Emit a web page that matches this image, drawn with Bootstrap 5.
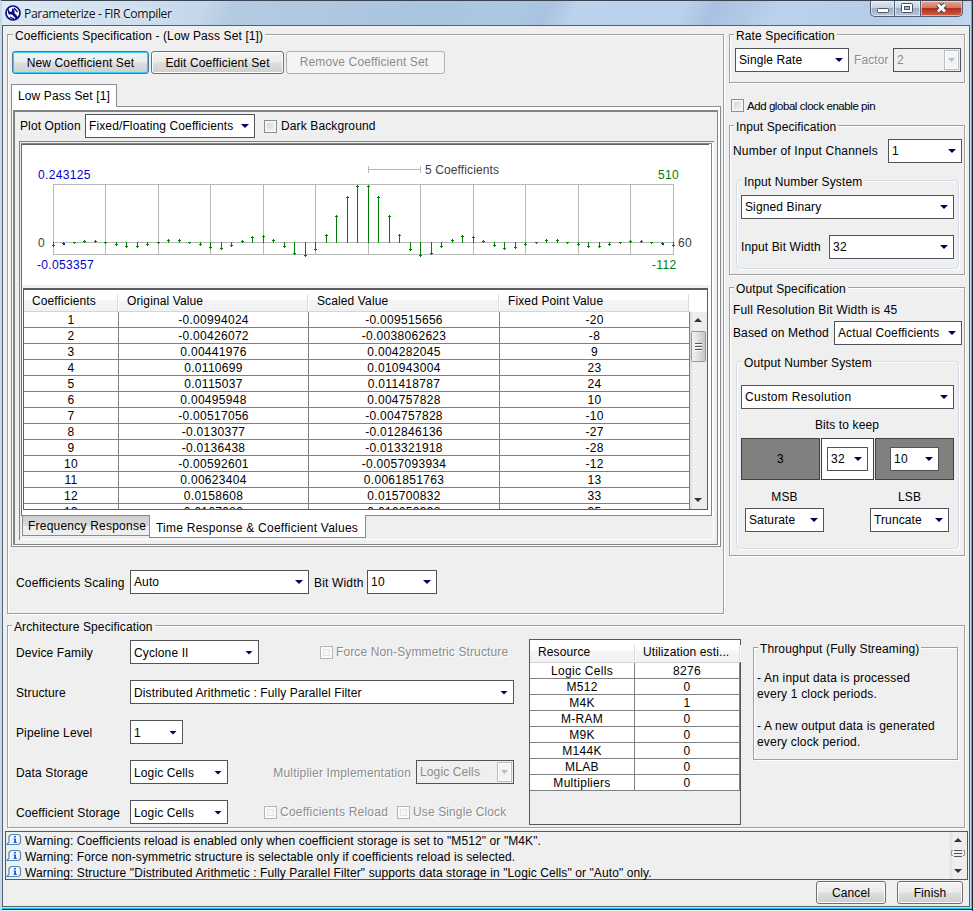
<!DOCTYPE html>
<html lang="en">
<head>
<meta charset="utf-8">
<title>Parameterize - FIR Compiler</title>
<link rel="stylesheet" href="https://cdn.jsdelivr.net/npm/bootstrap@5.3.0/dist/css/bootstrap.min.css">
<style>
*{box-sizing:border-box}
body{margin:0;background:#efefef;color:#000;font:12px/14px "Liberation Sans",Arial,sans-serif;letter-spacing:.12px;overflow:hidden;white-space:nowrap}
.win{width:973px;height:911px;background:#efefef;border-left:2px solid #c5d9ea;border-right:1px solid #1d2a33;border-top:1px solid #3a4453}
.frame{border-right:1px solid #18c8ee;height:908px;border-bottom:1px solid #18c8ee;background:#c5d9ea;box-shadow:0 1px 0 #202830}
.titlebar{height:24px;padding-left:3px;background:linear-gradient(112deg,#dde9f3 0,#cfdfee 14%,#c3d6ea 21%,#b4cbe2 24%,#adc6df 38%,#a9c5df 46%,#acc8e2 53%,#a9c2e0 56%,#bdd3ec 59%,#bad1ec 70%,#a9c1e0 73%,#bcd2ec 80%,#b5cdea 90%,#c3d8ee)}
.title-text{font:12.2px/16px "Open Sans","Noto Sans",sans-serif;letter-spacing:-.39px;margin-left:3px;padding-top:5px;color:#111;text-shadow:0 0 4px #fff}
.wb{height:16px;border:1px solid #535f72;border-top:0;background:linear-gradient(#dfe7f0,#c6d2e0 45%,#9fb0c6 50%,#b8c8da);box-shadow:inset 0 0 0 1px #ffffff80}
.wb-min{width:25px;border-radius:0 0 0 5px}
.wb-max{width:26px;border-left:0}
.wb-x{width:42px;border-left:0;border-radius:0 0 5px 0;background:linear-gradient(#e5a897,#d3745f 45%,#b52c18 50%,#cf6244)}
.client{width:968px;height:882px;border:1px solid #55616e;background:#efefef}
.grp{border:1px solid #a0a0a0;box-shadow:1px 1px 0 #fff,inset 1px 1px 0 #fff}
.grp.soft{border-color:#d2dde7;border-radius:4px}
.legend-t{width:max-content;height:14px;margin:-6px 0 0 4px;padding:0 2px;background:#efefef;position:relative}
.soft>.legend-t,#coefspec>.legend-t{margin-left:5px}
.combo{height:24px;border:1px solid #505458;background:#fff;padding:0 5px 0 3px;flex:none}
.combo::after{content:"";width:8px;height:4px;background:#00005c;clip-path:polygon(0 0,100% 0,50% 100%)}
.combo.off{background:#efefef;color:#8c8c8c;padding-right:1px}
.combo.off::after{display:none}
.offbtn{width:15px;height:20px;border:1px solid #b9bec2;background:#f3f3f3;box-shadow:inset 0 0 0 1px #fff}
.offbtn::after{content:"";width:7px;height:4px;background:#bcbcb8;clip-path:polygon(0 0,100% 0,50% 100%)}
.dim{color:#8c8c8c;text-shadow:1px 1px 0 #fff}
.box{width:13px;height:13px;border:1px solid #8e8f8f;background:linear-gradient(135deg,#cdd2d8,#f7f7f7);box-shadow:inset 0 0 0 2px #f4f4f4;flex:none}
.box.off{border-color:#b3b7b7;background:#f6f6f6;box-shadow:inset 0 0 0 2px #fafafa,inset 0 0 0 3px #e4e4e4}
.btn.jb{font:inherit;letter-spacing:inherit;height:23px;padding:0;color:#000;border:1px solid #707070;border-radius:3px;background:linear-gradient(#f3f3f3,#ebebeb 48%,#dddddd 52%,#cfcfcf);box-shadow:inset 0 0 0 1px #fcfcfc}
.btn.jb.focus{border-color:#3c7fa8;box-shadow:inset 0 0 0 1px #35cdf5}
.btn.jb.off{border-color:#adb2b5;background:#f4f4f4;color:#8c8c8c;box-shadow:none;padding:0 3px 2px 0}
.settab{width:106px;height:23px;border:1px solid #898c95;border-bottom:0;background:#fff;padding:4px 0 0 6px;margin-bottom:-1px;position:relative}
.setpane{width:710px;height:441px;border:1px solid #898c95;background:#fff;padding:3px 2px 0 1px}
.setinner{width:705px;height:435px;border:solid #828282;border-width:2px 1px 1px 2px;background:#efefef}
.plotpane{width:695px;height:399px;margin-left:4px;border:solid #808080;border-width:1px 0 0 1px;background:#fff;padding:1px 0 0 1px;box-shadow:inset 1px 1px 0 #efefef}
.viewpane{width:691px;height:373px;border:1px solid #85858f;border-left-color:#6d6d70}
.chart{width:687px;height:141px;border-top:1px solid #606064;background:#fff}
.splitter{height:3px;width:688px;background:#efefef}
.coef{width:685px;height:222px;margin-left:1px;border:2px solid #5b5d60;border-right-width:1px;border-bottom-width:1px;border-left-width:1px;overflow:hidden;background:#fff}
.th-r{background:linear-gradient(#fff 45%,#f4f5f6 50%,#f0f1f2);border-bottom:1px solid #d5d5d5}
.th-c{border-right:1px solid #dcdcdc;box-shadow:1px 0 0 #fff;flex:none}
.grid-t{border-collapse:separate;border-spacing:0;table-layout:fixed;text-align:center;color:#000;background:#fff;letter-spacing:.3px}
.grid-t td{height:16px;line-height:14px;padding:1px 0 0;border:solid #808080;border-width:0 1px 1px 0}
.scroll{width:17px;background:linear-gradient(90deg,#dcdcdc,#efefef 20%,#ececec);flex:none}
.bt1{width:128px;height:20px;margin-left:1px;border:1px solid #898c95;border-top:0;background:linear-gradient(#cfcfcf,#dadada 50%,#ececec 52%,#f0f0f0);padding:3px 0 0 5px;letter-spacing:.22px}
.bt2{width:217px;height:23px;margin:-1px 0 0 -1px;border:1px solid #898c95;border-top:0;background:#fff;padding:6px 0 0 6px;position:relative;letter-spacing:.24px}
.btabs{width:692px;height:23px;background:#efefef}
.bits{height:42px;border:1px solid #404040;background:#808080}
.lbl{width:114px;flex:none}
.warn{width:963px;height:49px;border:1px solid #55585b}
.warn svg{flex:none}
.upper{height:588px}
#coefspec{width:717px;height:580px;margin:8px 0 0 4px}
.topbtns{margin:8px 0 0 4px;gap:2px}#b1{width:137px}#b2{width:133px}#b3{width:159px}
.setwrap{margin:10px 0 0 3px}
.plotopts{height:24px;margin:2px 0 3px 5px}.po{width:65px}.db{margin-left:9px}
#hd{width:666px;height:22px;padding-top:4px}
.h1c,.h2c,.h3c,.h4c{padding-left:8px;height:17px}.h1c{width:94px}.h2c{width:190px;padding-left:9px}.h3c{width:191px;padding-left:9px}.h4c{width:190px;padding-left:9px}
#coeftab{width:666px}#vscroll{height:197px}
.scaling{margin:23px 0 0 8px;padding-top:0}.bw{width:58px;padding-left:5px}
.scaling>span{padding-top:1px;letter-spacing:.17px}
.rightcol{margin:8px 0 0 5px;width:236px}
#rate{height:49px}.raterow{margin:5px 0 0 5px}.fac{width:44px;padding-left:5px}
.clk{margin:16px 0 0 2px;height:13px}.clk-t{margin-left:3px;font-size:11.5px;letter-spacing:-.44px}
#inspec{height:150px;margin-top:13px}.chans{margin:5px 2px 0 3px;letter-spacing:.2px}
#inns{width:223px;height:89px;margin:17px 0 0 6px}.c-in{margin:6px 0 0 4px}.ibw{margin:16px 4px 0 4px}
#outspec{height:269px;margin-top:12px}.full{margin:7px 0 0 3px;letter-spacing:.16px}.method{margin:4px 2px 0 3px}
#outns{width:223px;height:188px;margin:16px 0 0 6px}.c-out{margin:15px 0 0 4px;letter-spacing:.3px}.keep{margin:9px 5px 0 4px;height:14px}.bitrow{margin:6px 0 0 4px;gap:1px}.sb{margin:10px 9px 0 8px}.sc{margin:4px 9px 0 8px}
.w170{width:170px}.w179{width:179px}.w70{width:70px}.w114{width:114px}.w68{width:68px}.w74{width:74px}.w213{width:213px}.w125{width:125px}.w128{width:128px}.w79{width:79px}.w53{width:53px}.w41{width:41px}.w49{width:49px}.w129{width:129px}.w384{width:384px}.w98{width:98px}
#arch{width:958px;height:203px;margin:11px 0 0 4px}
.archform{width:513px;padding-left:8px}.arow{height:24px;margin-bottom:16px}.arow.first{margin-top:6px}
.arow .lbl,.arow>.combo,.arow .mi{padding-top:1px}
.arow>.combo.off{padding-top:0}
.fns{margin-left:61px}.cbt{margin-left:3px;margin-top:-1px}.mi{width:188px;text-align:right;padding-right:5px;letter-spacing:.17px}.cr{margin-left:36px}.crt{width:117px;letter-spacing:.22px}
.restab{width:212px;height:186px;margin:5px 0 0 8px;border:1px solid #55585b}.restab .th-r{height:23px;padding-top:5px}.r1,.r2{padding-left:8px;width:105px;height:17px}
#rt{width:210px}
#thru{width:205px;height:113px;margin:13px 0 0 12px}.thr-t{line-height:16px;padding:14px 0 0 3px;letter-spacing:.18px}
.warn{margin:3px 0 0 2px}.wl{height:16px}.wl span{margin-left:3px;line-height:18px;letter-spacing:.1px}
.foot{margin:1px 6px 0 0;gap:11px}#bc{width:70px}#bf{width:66px}
.digits{letter-spacing:.33px}
</style>
</head>
<body>
<div class="win"><div class="frame">
 <div class="titlebar d-flex">
  <svg width="16" height="17" viewBox="0 0 16 17" class="mt-1"><circle cx="8" cy="8" r="7" fill="#fff" stroke="#0b0b86" stroke-width="1.7"/><path d="M4 3.200C2.500 5 2.500 8 4 9.500l3 0 4 4.500 2-2-3.500-4V5L7 3v3.200L5.500 7 4 6z" fill="#0b0b86"/><path d="M9 3l3.500 4M5 12l4 2" stroke="#0b0b86" stroke-width="1.300"/></svg>
  <div class="title-text">Parameterize - FIR Compiler</div>
  <div class="d-flex ms-auto me-1 pe-1">
   <div class="wb wb-min"><svg width="24" height="15" class="d-block"><rect x="6.500" y="7.500" width="11" height="4" rx="1" fill="#fff" stroke="#4d5262"/></svg></div>
   <div class="wb wb-max"><svg width="25" height="15" class="d-block"><rect x="6.500" y="2.500" width="11" height="9" rx="1" fill="#fff" stroke="#4d5262"/><rect x="9.500" y="5.500" width="5" height="3" fill="#a5b5ca" stroke="#4d5262"/></svg></div>
   <div class="wb wb-x"><svg width="41" height="15" class="d-block"><path d="M17 3.500l7 7M24 3.500l-7 7" stroke="#4b4452" stroke-width="5"/><path d="M17 3.500l7 7M24 3.500l-7 7" stroke="#fff" stroke-width="2.800"/></svg></div>
  </div>
 </div>
 <div class="client">
  <div class="d-flex upper">
   <!-- coefficients -->
   <section class="grp" id="coefspec">
    <div class="legend-t">Coefficients Specification - (Low Pass Set [1])</div>
    <div class="d-flex topbtns">
     <button class="btn jb focus" id="b1">New Coefficient Set</button>
     <button class="btn jb" id="b2">Edit Coefficient Set</button>
     <button class="btn jb off" id="b3">Remove Coefficient Set</button>
    </div>
    <div class="setwrap">
     <div class="settab">Low Pass Set [1]</div>
     <div class="setpane"><div class="setinner">
      <div class="d-flex align-items-center plotopts">
       <span class="po">Plot Option</span>
       <div class="combo d-flex justify-content-between align-items-center w170">Fixed/Floating Coefficients</div>
       <span class="box db"></span><span class="ms-1">Dark Background</span>
      </div>
      <div class="plotpane">
       <div class="viewpane">
        <div class="chart"><svg id="plot" class="d-block" width="687" height="140" viewBox="22 145 687 140" shape-rendering="crispEdges"></svg></div>
        <div class="splitter"></div>
        <div class="coef">
         <div class="d-flex th-r" id="hd"><div class="th-c h1c">Coefficients</div><div class="th-c h2c">Original Value</div><div class="th-c h3c">Scaled Value</div><div class="th-c h4c">Fixed Point Value</div></div>
         <div class="d-flex">
          <table class="grid-t" id="coeftab">
           <colgroup><col style="width:95px"><col style="width:190px"><col style="width:191px"><col style="width:190px"></colgroup>
           <tbody>
           <tr><td>1</td><td>-0.00994024</td><td>-0.009515656</td><td>-20</td></tr>
           <tr><td>2</td><td>-0.00426072</td><td>-0.0038062623</td><td>-8</td></tr>
           <tr><td>3</td><td>0.00441976</td><td>0.004282045</td><td>9</td></tr>
           <tr><td>4</td><td>0.0110699</td><td>0.010943004</td><td>23</td></tr>
           <tr><td>5</td><td>0.0115037</td><td>0.011418787</td><td>24</td></tr>
           <tr><td>6</td><td>0.00495948</td><td>0.004757828</td><td>10</td></tr>
           <tr><td>7</td><td>-0.00517056</td><td>-0.004757828</td><td>-10</td></tr>
           <tr><td>8</td><td>-0.0130377</td><td>-0.012846136</td><td>-27</td></tr>
           <tr><td>9</td><td>-0.0136438</td><td>-0.013321918</td><td>-28</td></tr>
           <tr><td>10</td><td>-0.00592601</td><td>-0.0057093934</td><td>-12</td></tr>
           <tr><td>11</td><td>0.00623404</td><td>0.0061851763</td><td>13</td></tr>
           <tr><td>12</td><td>0.0158608</td><td>0.015700832</td><td>33</td></tr>
           <tr><td>13</td><td>0.0167082</td><td>0.016652398</td><td>35</td></tr>
           </tbody>
          </table>
          <div class="scroll" id="vscroll"><svg width="17" height="197" class="d-block"><path d="M4 10l4-4 4 4z" fill="#333"/><path d="M4 186h8l-4 4z" fill="#333"/><linearGradient id="tg"><stop stop-color="#f6f6f6"/><stop offset="1" stop-color="#c4c4c8"/></linearGradient><rect x="1.500" y="19.500" width="14" height="30" rx="1" fill="url(#tg)" stroke="#959595"/><path d="M5 31.500h7M5 34.500h7M5 37.500h7" stroke="#555"/><path d="M5 32.500h7M5 35.500h7M5 38.500h7" stroke="#fff"/></svg></div>
         </div>
        </div>
       </div>
       <div class="btabs d-flex"><div class="bt1">Frequency Response</div><div class="bt2">Time Response &amp; Coefficient Values</div></div>
      </div>
     </div></div>
    </div>
    <div class="d-flex align-items-center scaling">
     <span class="lbl">Coefficients Scaling</span>
     <div class="combo d-flex justify-content-between align-items-center w179">Auto</div>
     <span class="bw">Bit Width</span>
     <div class="combo digits d-flex justify-content-between align-items-center w70">10</div>
    </div>
   </section>
   <!-- right-hand column -->
   <div class="rightcol">
    <section class="grp" id="rate">
     <div class="legend-t">Rate Specification</div>
     <div class="d-flex align-items-center raterow">
      <div class="combo d-flex justify-content-between align-items-center w114">Single Rate</div>
      <span class="dim fac">Factor</span>
      <div class="combo off d-flex justify-content-between align-items-center w68">2<span class="offbtn d-flex align-items-center justify-content-center"></span></div>
     </div>
    </section>
    <div class="d-flex align-items-center clk"><span class="box"></span><span class="clk-t">Add global clock enable pin</span></div>
    <section class="grp" id="inspec">
     <div class="legend-t">Input Specification</div>
     <div class="d-flex align-items-center justify-content-between chans"><span>Number of Input Channels</span><div class="combo d-flex justify-content-between align-items-center w74">1</div></div>
     <div class="grp soft" id="inns">
      <div class="legend-t">Input Number System</div>
      <div class="combo d-flex justify-content-between align-items-center w213 c-in">Signed Binary</div>
      <div class="d-flex align-items-center justify-content-between ibw"><span>Input Bit Width</span><div class="combo digits d-flex justify-content-between align-items-center w125">32</div></div>
     </div>
    </section>
    <section class="grp" id="outspec">
     <div class="legend-t">Output Specification</div>
     <div class="full">Full Resolution Bit Width is 45</div>
     <div class="d-flex align-items-center justify-content-between method"><span>Based on Method</span><div class="combo d-flex justify-content-between align-items-center w128">Actual Coefficients</div></div>
     <div class="grp soft" id="outns">
      <div class="legend-t">Output Number System</div>
      <div class="combo d-flex justify-content-between align-items-center w213 c-out">Custom Resolution</div>
      <div class="text-center keep">Bits to keep</div>
      <div class="d-flex bitrow">
       <div class="bits w79 d-flex align-items-center justify-content-center">3</div>
       <div class="bits w53 bg-white d-flex align-items-center justify-content-center"><div class="combo digits d-flex justify-content-between align-items-center w41">32</div></div>
       <div class="bits w79 d-flex align-items-center justify-content-center"><div class="combo digits d-flex justify-content-between align-items-center w49">10</div></div>
      </div>
      <div class="d-flex justify-content-between sb"><div class="w79 text-center">MSB</div><div class="w79 text-center">LSB</div></div>
      <div class="d-flex justify-content-between sc"><div class="combo d-flex justify-content-between align-items-center w79">Saturate</div><div class="combo d-flex justify-content-between align-items-center w79">Truncate</div></div>
     </div>
    </section>
   </div>
  </div>
  <!-- architecture -->
  <section class="grp" id="arch">
   <div class="legend-t">Architecture Specification</div>
   <div class="d-flex">
    <div class="archform">
     <div class="d-flex align-items-center arow first"><span class="lbl">Device Family</span><div class="combo d-flex justify-content-between align-items-center w129">Cyclone II</div><span class="box off fns"></span><span class="dim cbt">Force Non-Symmetric Structure</span></div>
     <div class="d-flex align-items-center arow"><span class="lbl">Structure</span><div class="combo d-flex justify-content-between align-items-center w384">Distributed Arithmetic : Fully Parallel Filter</div></div>
     <div class="d-flex align-items-center arow"><span class="lbl">Pipeline Level</span><div class="combo d-flex justify-content-between align-items-center w53">1</div></div>
     <div class="d-flex align-items-center arow"><span class="lbl">Data Storage</span><div class="combo d-flex justify-content-between align-items-center w98">Logic Cells</div><span class="dim mi">Multiplier Implementation</span><div class="combo off d-flex justify-content-between align-items-center w98">Logic Cells<span class="offbtn d-flex align-items-center justify-content-center"></span></div></div>
     <div class="d-flex align-items-center arow"><span class="lbl">Coefficient Storage</span><div class="combo d-flex justify-content-between align-items-center w98">Logic Cells</div><span class="box off cr"></span><span class="dim cbt crt">Coefficients Reload</span><span class="box off"></span><span class="dim cbt">Use Single Clock</span></div>
    </div>
    <div class="restab">
     <div class="d-flex th-r"><div class="th-c r1">Resource</div><div class="th-c r2">Utilization esti...</div></div>
     <table class="grid-t" id="rt"><colgroup><col style="width:105px"><col style="width:105px"></colgroup><tbody>
      <tr><td>Logic Cells</td><td>8276</td></tr><tr><td>M512</td><td>0</td></tr><tr><td>M4K</td><td>1</td></tr><tr><td>M-RAM</td><td>0</td></tr><tr><td>M9K</td><td>0</td></tr><tr><td>M144K</td><td>0</td></tr><tr><td>MLAB</td><td>0</td></tr><tr><td>Multipliers</td><td>0</td></tr>
     </tbody></table>
    </div>
    <div class="grp" id="thru">
     <div class="legend-t">Throughput (Fully Streaming)</div>
     <div class="thr-t">- An input data is processed<br>every 1 clock periods.<br><br>- A new output data is generated<br>every clock period.</div>
    </div>
   </div>
  </section>
  <div class="warn d-flex justify-content-between">
   <div>
    <div class="d-flex wl"><svg width="16" height="16"><use href="#info"/></svg><span>Warning: Coefficients reload is enabled only when coefficient storage is set to "M512" or "M4K".</span></div>
    <div class="d-flex wl"><svg width="16" height="16"><use href="#info"/></svg><span>Warning: Force non-symmetric structure is selectable only if coefficients reload is selected.</span></div>
    <div class="d-flex wl"><svg width="16" height="16"><use href="#info"/></svg><span>Warning: Structure "Distributed Arithmetic : Fully Parallel Filter" supports data storage in "Logic Cells" or "Auto" only.</span></div>
   </div>
   <div class="scroll"><svg width="17" height="47" class="d-block"><path d="M4 10l4-4 4 4z" fill="#333"/><path d="M4 37h8l-4 4z" fill="#333"/><path d="M3 18.500H1.500v5H3M13 18.500h1.500v5H13" fill="none" stroke="#999"/><path d="M4 18.500h8M4 21.500h8M4 24.500h8" stroke="#555"/></svg></div>
  </div>
  <div class="d-flex justify-content-end foot"><button class="btn jb" id="bc">Cancel</button><button class="btn jb" id="bf">Finish</button></div>
 </div>
</div></div>
<svg width="0" height="0" class="d-block"><defs><symbol id="info" viewBox="0 0 16 16"><path d="M5.500 2.500h6a3 3 0 0 1 3 3v4a3 3 0 0 1-3 3H1L3 10V5.500a3 3 0 0 1 2.500-3z" fill="#f4f9ff" stroke="#4e83bd" stroke-width="1.200"/><path d="M8 4h2v1.500H8zM7.500 6.500H10V10h1v1H7.500v-1H8.200V7.500H7.500z" fill="#1d5fc4"/></symbol></defs></svg>
<script>
// Stem plot: tip rows of the first 30 taps, the rest is mirrored
const half=[245,243,242,241,241,242,244,246,246,244,242,240,240,242,244,247,248,245,241,237,236,240,246,253,255,249,235,216,197,186];
const tips=half.concat([...half].reverse());
const X=n=>Math.floor(53+10.5*n+.2)+.5;
let s='<g stroke="#b8b8b8" fill="none"><rect x="53.5" y="184.500" width="620" height="70"/><path d="M53 242.500H674';
for(let i=5;i<60;i+=5)s+=`M${X(i)} 184V254`;
s+='M368.500 166V173M420.500 166V173M368 169.500H421"/></g><path stroke="#008000" d="';
tips.forEach((y,n)=>{const x=n===59?673.5:X(n);s+=y<242?`M${x} 243V${y-1}`:`M${x} 242V${y+2}`;s+=`M${x-1.5} ${y+.5}h3`});
s+='"/><path d="M63 244h2v1h-2zM662 244h2v1h-2z" fill="#0000c0"/>';
const t=(x,y,c,v)=>`<text x="${x}" y="${y}" fill="${c}">${v}</text>`;
s+='<g class="digits">'+t(38,179,'#0000cc','0.243125')+t(37,269,'#0000cc','-0.053357')+t(38,247,'#404040','0')+t(658,179,'#008000','510')+t(652,269,'#008000','-112')+t(678,247,'#404040','60')+'</g>'+t(425,174,'#404040','5 Coefficients');
document.getElementById('plot').innerHTML=s;
</script>
<script src="https://cdn.jsdelivr.net/npm/bootstrap@5.3.0/dist/js/bootstrap.bundle.min.js"></script>
</body>
</html>
